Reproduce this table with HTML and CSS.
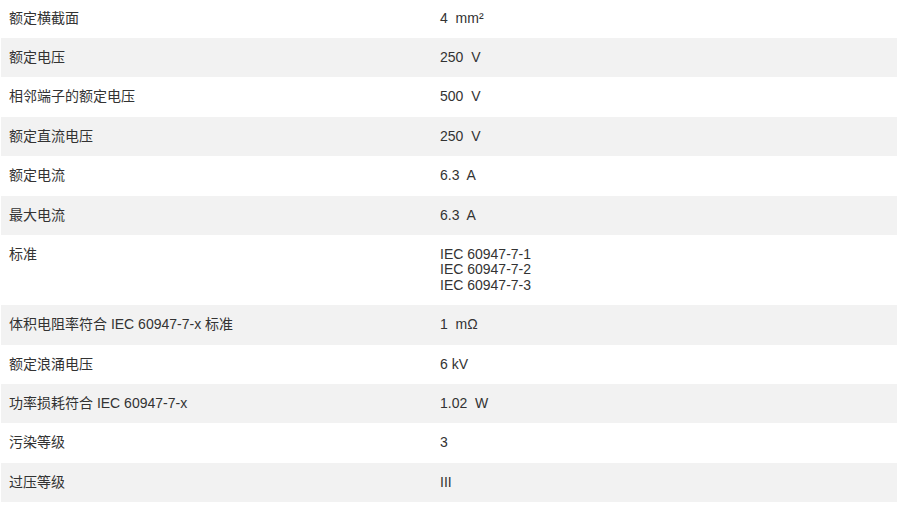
FILE: index.html
```html
<!DOCTYPE html>
<html lang="zh-CN">
<head>
<meta charset="utf-8">
<title>技术参数</title>
<link rel="stylesheet" href="styles.css">
</head>
<body>
<div class="spec">
  <div class="row"><div class="k">额定横截面</div><div class="v">4&nbsp; mm²</div></div>
  <div class="row"><div class="k">额定电压</div><div class="v">250&nbsp; V</div></div>
  <div class="row"><div class="k">相邻端子的额定电压</div><div class="v">500&nbsp; V</div></div>
  <div class="row"><div class="k">额定直流电压</div><div class="v">250&nbsp; V</div></div>
  <div class="row"><div class="k">额定电流</div><div class="v">6.3&nbsp; A</div></div>
  <div class="row"><div class="k">最大电流</div><div class="v">6.3&nbsp; A</div></div>
  <div class="row"><div class="k">标准</div><div class="v">IEC 60947-7-1<br>IEC 60947-7-2<br>IEC 60947-7-3</div></div>
  <div class="row"><div class="k">体积电阻率符合 IEC 60947-7-x 标准</div><div class="v">1&nbsp; mΩ</div></div>
  <div class="row"><div class="k">额定浪涌电压</div><div class="v">6 kV</div></div>
  <div class="row"><div class="k">功率损耗符合 IEC 60947-7-x</div><div class="v">1.02&nbsp; W</div></div>
  <div class="row"><div class="k">污染等级</div><div class="v">3</div></div>
  <div class="row"><div class="k">过压等级</div><div class="v">III</div></div>
</div>
</body>
</html>
```
FILE: styles.css
```css
html, body {
  margin: 0;
  padding: 0;
  background: #ffffff;
}
body {
  font-family: "Liberation Sans", "Noto Sans CJK SC", sans-serif;
  font-size: 14px;
  color: #333333;
}
.spec {
  margin-top: -1.4px;
  padding-left: 1px;
}
.row {
  display: grid;
  grid-template-columns: 431px 1fr;
}
.row:nth-child(even) {
  background: #f2f2f2;
}
.k, .v {
  padding: 12px 8px;
  line-height: 15.4px;
}
```
